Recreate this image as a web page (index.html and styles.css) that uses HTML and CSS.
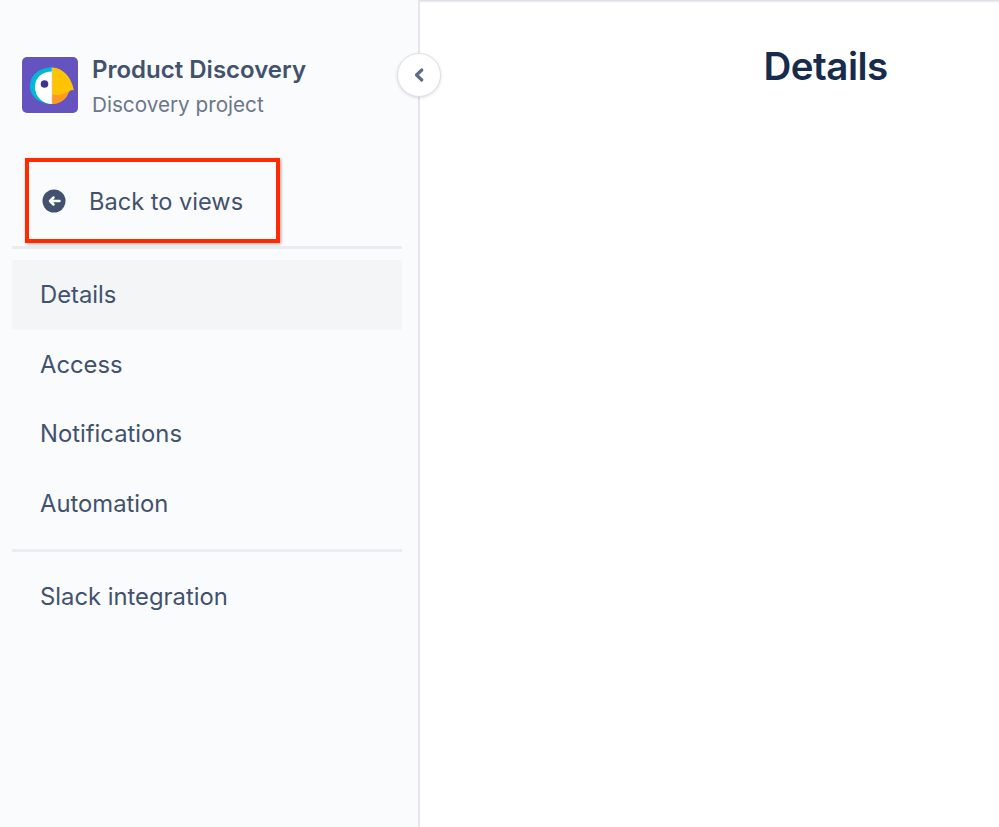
FILE: index.html
```html
<!DOCTYPE html>
<html lang="en">
<head>
<meta charset="utf-8">
<title>Details</title>
<link rel="stylesheet" href="styles.css">
</head>
<body>
<div class="app">
  <aside class="sidebar">
    <header class="project">
      <div class="logo">
        <svg viewBox="0 0 56 56" width="56" height="56">
          <rect width="56" height="56" rx="5" fill="#6554c0"/>
          <path d="M30 10.500 C18 10.500 8 17.500 8 29 C8 40 18 47 30 47Z" fill="#00b8d9"/>
          <path d="M30 14.500 C21 14.500 13 20 13 30 C13 40 21 47 30 47Z" fill="#fff"/>
          <circle cx="22.500" cy="27" r="3.800" fill="#403294"/>
          <path d="M30 10.500 C42 11 49.500 21 52 33.500 C49.500 32.500 48 33.500 46.500 35.500 C44 43 37 47 30 47Z" fill="#ffc400"/>
          <path d="M30 37.500 C36 38.500 42 37.500 46.500 34.500 C44 43 37 47 30 47Z" fill="#ff991f"/>
          <path d="M30 10.500V47" stroke="#c9ccd6" stroke-width=".6"/>
        </svg>
      </div>
      <div class="project-text">
        <div class="project-name">Product Discovery</div>
        <div class="project-type">Discovery project</div>
      </div>
    </header>
    <div class="back">
      <svg class="back-icon" viewBox="0 0 24 24" width="24" height="24">
        <circle cx="12" cy="12" r="11.500" fill="#42526e"/>
        <path d="M17.500 12H8.500M11.500 8.500 8 12l3.500 3.500" fill="none" stroke="#fafbfc" stroke-width="2.500" stroke-linecap="round" stroke-linejoin="round"/>
      </svg>
      <span>Back to views</span>
    </div>
    <hr class="rule rule-top">
    <nav class="nav">
      <a class="item active">Details</a>
      <a class="item">Access</a>
      <a class="item">Notifications</a>
      <a class="item">Automation</a>
    </nav>
    <hr class="rule rule-mid">
    <nav class="nav">
      <a class="item">Slack integration</a>
    </nav>
    <div class="callout"></div>
  </aside>
  <button class="collapse" aria-label="Collapse">
    <svg viewBox="0 0 12 16" width="12" height="16"><path d="M8.800 3 3.500 8l5.300 5" fill="none" stroke="#5e6c84" stroke-width="3.200" stroke-linecap="round" stroke-linejoin="round"/></svg>
  </button>
  <main class="main">
    <h1 class="title">Details</h1>
  </main>
</div>
</body>
</html>
```
FILE: styles.css
```css
* { box-sizing: border-box; }
html, body { margin: 0; height: 100%; background: #fff; overflow: hidden; }
body { font-family: Inter, "Liberation Sans", sans-serif; color: #42526e; }
.app { position: relative; display: flex; height: 827px; }
.app::before { content: ""; position: absolute; left: 0; right: 0; top: 0; height: 3px; background: linear-gradient(#d8dae0, #f4f5f7 70%, transparent); }
.sidebar { position: relative; width: 419.500px; flex: none; background: #fafbfc; border-right: 2px solid #e4e5e9; padding: 54px 16px 0 12px; }
.project { display: flex; align-items: flex-start; gap: 14px; padding-left: 10px; height: 62px; }
.logo { width: 56px; height: 56px; margin-top: 3px; flex: none; border-radius: 5px; box-shadow: 0 0 0 2px #fff; }
.logo svg { display: block; }
.project-text { display: flex; flex-direction: column; gap: 5.500px; margin-top: 1px; }
.project-name { font-size: 24px; line-height: 30px; font-weight: 600; white-space: nowrap; }
.project-type { font-size: 20.700px; line-height: 27px; color: #6b778c; white-space: nowrap; }
.back { display: flex; align-items: center; gap: 23px; margin-top: 58px; padding-left: 30px; height: 54px; font-size: 23.600px; }
.back-icon { flex: none; }
.rule { border: 0; height: 3px; margin: 0; background: #ebecf0; }
.rule-top { margin-top: 18px; }
.rule-mid { margin-top: 11px; }
.nav { display: flex; flex-direction: column; }
.rule-top + .nav { margin-top: 11px; }
.rule-mid + .nav { margin-top: 9.500px; }
.item { display: flex; align-items: center; height: 69.500px; padding-left: 28px; font-size: 23.800px; color: #42526e; border-radius: 3px; }
.item.active { background: #f4f5f7; }
.callout { position: absolute; left: 25px; top: 158px; width: 255px; height: 85px; border: 4.500px solid #ff2a00; box-shadow: 1px 1px 3px rgba(0,0,0,.35); }
.collapse { position: absolute; left: 397px; top: 53px; width: 44px; height: 44px; padding: 0; display: flex; align-items: center; justify-content: center; border-radius: 50%; background: #fff; border: 1px solid #dfe1e6; box-shadow: 0 1px 3px rgba(9,30,66,.15); }
.main { flex: 1; min-width: 0; padding: 40px 0 0 344px; }
.title { margin: 0; font-size: 38.500px; line-height: 52px; font-weight: 600; color: #172b4d; letter-spacing: -.5px; }
```
